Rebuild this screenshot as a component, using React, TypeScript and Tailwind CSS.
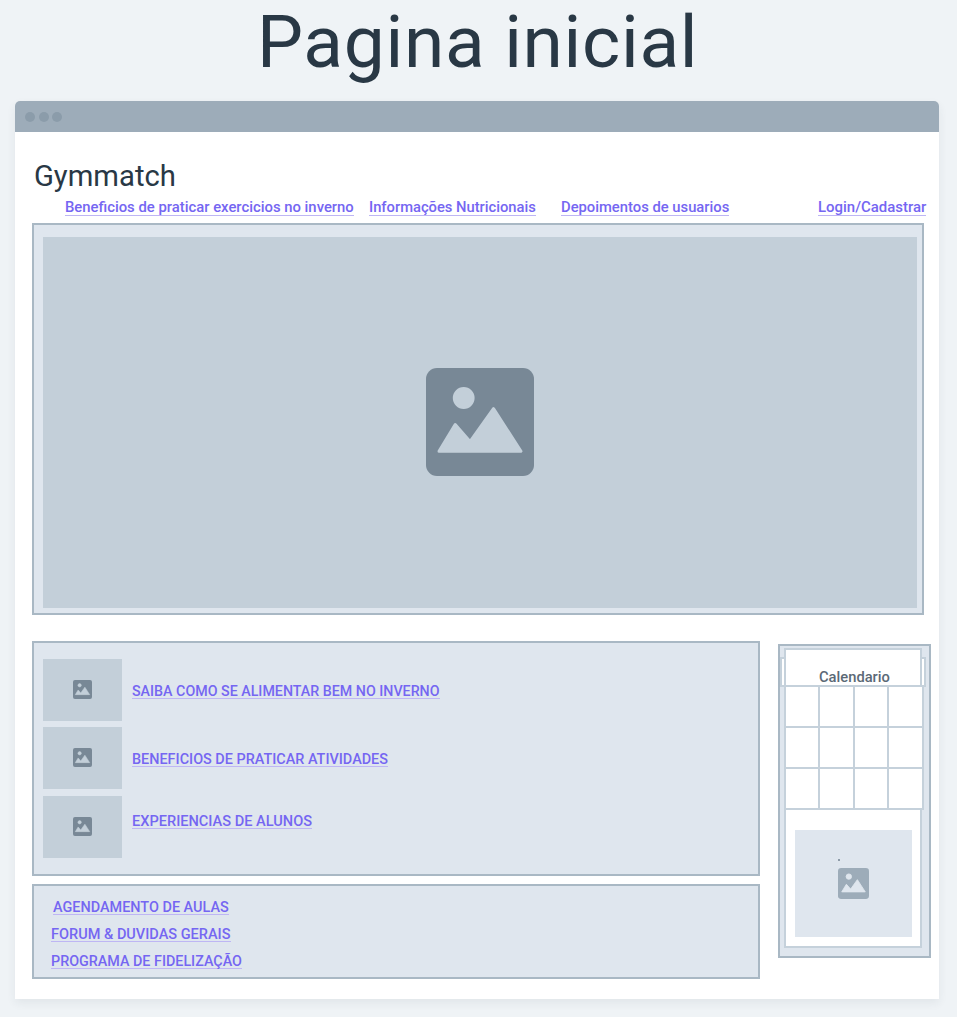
import React from "react";

function Picture({ className }: { className: string }) {
  return (
    <svg viewBox="0 0 108 108" className={className} aria-hidden="true">
      <rect width="108" height="108" rx="11" fill="currentColor" />
      <g className="fill-current text-[var(--hole)] stroke-current" strokeWidth="3" strokeLinejoin="round">
        <circle cx="37.7" cy="30" r="9.4" />
        <path d="M13 83.2 29.2 56.6 44 73.5 67.5 40.6 95 83.2Z" />
      </g>
    </svg>
  );
}

function Link({ className, text, children }: { className: string; text: string; children: React.ReactNode }) {
  return (
    <a
      href="#"
      className={"block h-[17px] whitespace-nowrap border-b border-[#beb6f4] text-[15.5px] leading-[18px] font-medium text-[#7566f2] " + className}
    >
      <span className={"inline-block origin-left " + text}>{children}</span>
    </a>
  );
}

function Thumb({ className }: { className: string }) {
  return (
    <div className={"flex h-[62px] w-[79.5px] shrink-0 items-center justify-center bg-[#c3cfd9] text-[#788896] [--hole:#c3cfd9] " + className}>
      <Picture className="-mt-[2px] h-[19px] w-[19px]" />
    </div>
  );
}

export default function App() {
  return (
    <div className="h-[1017px] w-[957px] overflow-hidden bg-[#eff3f6] font-['Roboto','Liberation_Sans',sans-serif]">
      <h1 className="h-[101px] pl-[257px] text-[73px] leading-[84px] tracking-[0.7px] whitespace-nowrap text-[#293845]">
        Pagina inicial
      </h1>
      <main className="ml-[14.5px] h-[898px] w-[924.5px] rounded-t-[5px] bg-white shadow-[0_4px_10px_rgba(41,56,69,0.07)]">
        <div className="flex h-[31px] items-center gap-[3.5px] rounded-t-[5px] bg-[#9dacb9] pl-[10.5px]">
          <i className="size-[10px] rounded-full bg-[#8b9caa]" />
          <i className="size-[10px] rounded-full bg-[#8b9caa]" />
          <i className="size-[10px] rounded-full bg-[#8b9caa]" />
        </div>
        <div className="ml-[17.5px] pt-[26px]">
          <h2 className="h-9 origin-left scale-x-[0.975] pl-[2px] text-[30px] leading-9 text-[#293845] w-[160px]">Gymmatch</h2>
          <nav className="mt-1 flex h-[18px] pl-[33px]">
            <Link className="h-[18px] w-[289px]" text="scale-x-[0.957]">Beneficios de praticar exercicios no inverno</Link>
            <Link className="ml-[15px] h-[18px] w-[167px]" text="scale-x-[0.95]">Informações Nutricionais</Link>
            <Link className="ml-[25px] h-[18px] w-[168px]" text="scale-x-[0.953]">Depoimentos de usuarios</Link>
            <Link className="ml-[89px] h-[18px] w-[108px]" text="scale-x-[0.965]">Login/Cadastrar</Link>
          </nav>
          <section className="mt-[7px] h-[392px] w-[892px] border-2 border-[#a9b8c4] bg-[#dfe6ee] pt-[12px] pl-[8.5px]">
            <div className="flex h-[371px] w-[874px] items-center justify-center bg-[#c3cfd9] text-[#788896] [--hole:#c3cfd9]">
              <Picture className="-mt-[1px] h-[108px] w-[108px]" />
            </div>
          </section>
          <div className="mt-[26px] flex items-start">
            <div className="w-[727.5px]">
              <section className="flex h-[235px] border-2 border-[#a9b8c4] bg-[#dfe6ee] pt-[16px] pl-[8.5px]">
                <div>
                  <Thumb className="" />
                  <Thumb className="mt-[6px]" />
                  <Thumb className="mt-[7px]" />
                </div>
                <div className="pt-[23px] pl-[10px]">
                  <Link className="w-[308px]" text="scale-x-[0.919]">SAIBA COMO SE ALIMENTAR BEM NO INVERNO</Link>
                  <Link className="mt-[51px] w-[256px]" text="scale-x-[0.93]">BENEFICIOS DE PRATICAR ATIVIDADES</Link>
                  <Link className="mt-[45px] w-[180px]" text="scale-x-[0.94]">EXPERIENCIAS DE ALUNOS</Link>
                </div>
              </section>
              <section className="mt-2 h-[95px] border-2 border-[#a9b8c4] bg-[#dfe6ee] pt-[12px] pl-[17px]">
                <Link className="ml-[2px] w-[176px]" text="scale-x-[0.931]">AGENDAMENTO DE AULAS</Link>
                <Link className="mt-[10px] w-[180px]" text="scale-x-[0.937]">FORUM &amp; DUVIDAS GERAIS</Link>
                <Link className="mt-[10px] w-[191px]" text="scale-x-[0.924]">PROGRAMA DE FIDELIZAÇÃO</Link>
              </section>
            </div>
            <aside className="mt-[3px] ml-[18.5px] h-[314px] w-[153px] border-2 border-[#a9b8c4] bg-[#dfe6ee] pt-[2px] pl-[4px]">
              <div className="relative h-[300px] w-[138px] border-2 border-[#c5d1db] bg-white">
                <i className="absolute top-[7px] -left-[6px] h-[30px] w-[6px] border-2 border-[#c5d1db] bg-white" />
                <i className="absolute top-[7px] -right-[6px] h-[30px] w-[6px] border-2 border-[#c5d1db] bg-white" />
                <h3 className="h-[35px] w-[120px] pt-[18px] pl-[33px] text-[15.5px] leading-[18px] font-medium text-[#5b6976]">
                  <span className="inline-block origin-left scale-x-[0.95]">Calendario</span>
                </h3>
                <div className="relative -ml-[2px] grid h-[125px] w-[140px] grid-cols-[32px_33px_32px_33px] grid-rows-[39px_39px_39px] gap-[2px] border-2 border-[#c5d1db] bg-[#c5d1db]">
                  {Array.from({ length: 12 }, (_, i) => (
                    <i key={i} className="bg-white" />
                  ))}
                </div>
                <div className="relative mt-[20px] ml-[9px] flex h-[107px] w-[117px] items-center justify-center bg-[#dfe6ee] text-[#9dacb9] [--hole:#dfe6ee]">
                  <Picture className="h-[31px] w-[31px]" />
                  <i className="absolute top-[29px] left-[43px] h-[2px] w-[2px] bg-[#8d9ba8]" />
                </div>
              </div>
            </aside>
          </div>
        </div>
      </main>
    </div>
  );
}
